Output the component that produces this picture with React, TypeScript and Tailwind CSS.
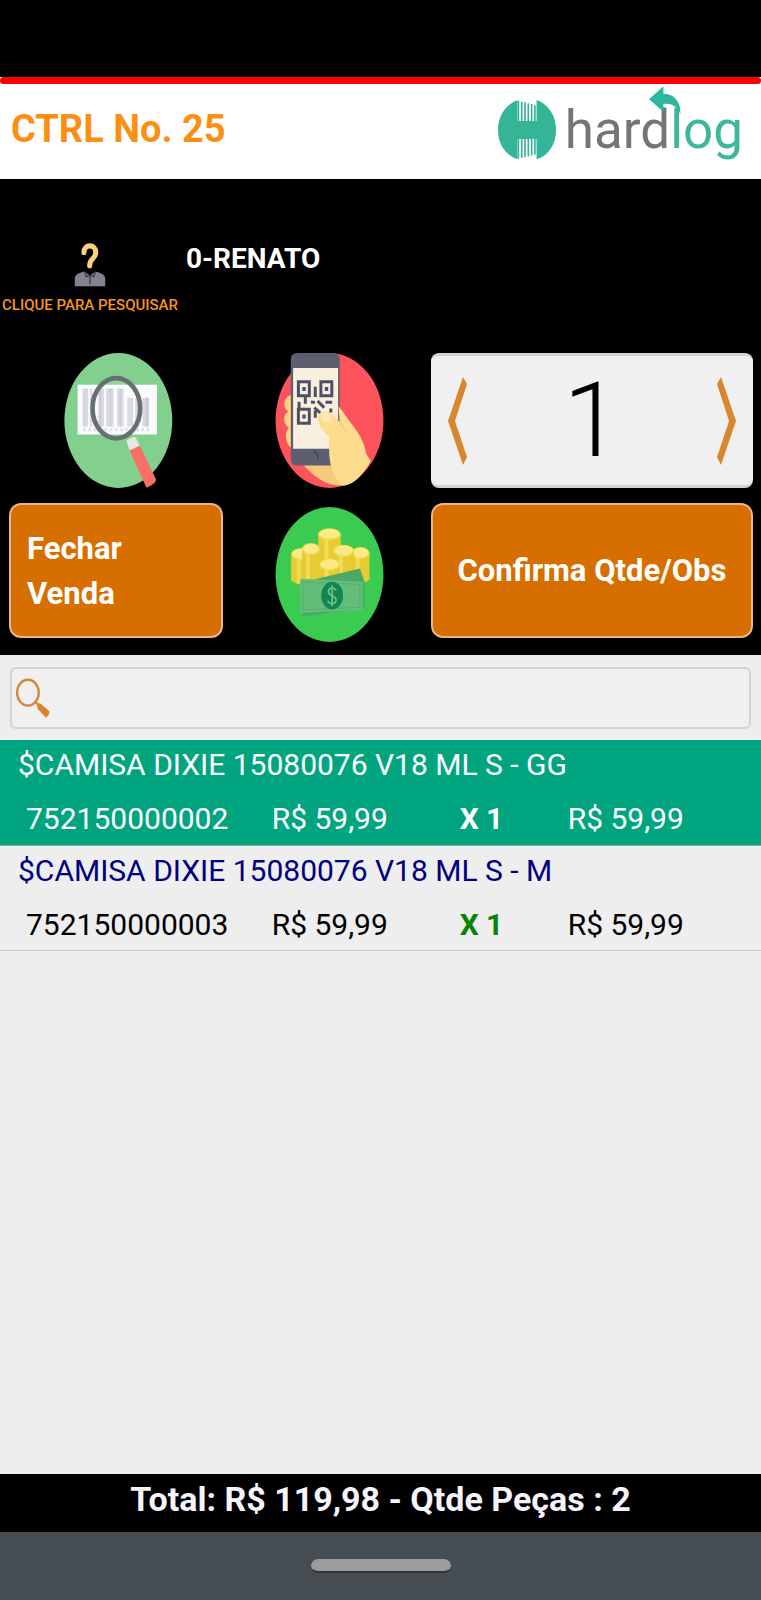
import { useState } from 'react';

type Item = { name: string; code: string; price: string; qty: string; total: string; selected: boolean };

const items: Item[] = [
  { name: '$CAMISA DIXIE 15080076 V18 ML S - GG', code: '752150000002', price: 'R$ 59,99', qty: 'X 1', total: 'R$ 59,99', selected: true },
  { name: '$CAMISA DIXIE 15080076 V18 ML S - M', code: '752150000003', price: 'R$ 59,99', qty: 'X 1', total: 'R$ 59,99', selected: false },
];

function Logo() {
  return (
    <div className="flex items-center gap-2">
      <svg viewBox="50 80 182 190" className="h-16 w-15" aria-hidden="true">
        <path d="M112 84V148H170V84C205 96 229 130 229 175S205 254 170 264V202H112V264C78 252 53 220 53 175S78 98 112 84Z" fill="#35b597" />
        <path
          d="M115 86v66M125 89v62M135 91v60M145 94v57M155 96v55M165 100v50M115 200v62M125 200v60M135 200v58M145 200v55M155 200v52M165 200v49"
          stroke="#35b597"
          strokeWidth="5"
        />
      </svg>
      <div className="relative text-[53px] leading-[64px] font-normal text-[#757575]">
        hard<span className="text-[#3fb79c]">log</span>
        <svg viewBox="500 46 98 86" className="absolute -top-3 left-21 h-7 w-8" aria-hidden="true">
          <path d="M500 87 544 47V70C576 70 599 95 596 132 586 108 570 99 544 101V125Z" fill="#2bb89c" />
        </svg>
      </div>
    </div>
  );
}

function PersonIcon() {
  return (
    <svg viewBox="236 70 92 130" className="h-11 w-8" aria-hidden="true">
      <path d="M264 98C264 72 299 72 299 98 299 118 281 114 281 137" fill="none" stroke="#fbd27c" strokeWidth="15" strokeLinecap="round" />
      <path d="M237 198V176C238 162 246 160 265 154L282 166 299 154C316 160 326 162 327 176V198Z" fill="#84828f" />
      <path d="M265 153 282 165 271 171ZM299 153 282 165 293 171Z" fill="#6c6a77" stroke="#15151b" strokeWidth="2" />
      <path d="M282 165V192" stroke="#202027" strokeWidth="3" />
    </svg>
  );
}

function BarcodeIcon() {
  return (
    <svg viewBox="72 38 327 408" className="h-[135px] w-[109px]" aria-hidden="true">
      <ellipse cx="235" cy="242" rx="163" ry="204" fill="#83d08e" />
      <path d="M112 134H352V284H112Z" fill="#fbfbfe" />
      <path d="M127 145h17v115h-17zM150 145h6v115h-6zM174 145h18v115h-18zM198 145h23v115h-23zM231 145h20v115h-20zM262 173h18v87h-18zM286 173h10v87h-10zM308 173h20v87h-20z" fill="#d6d6e0" />
      <path d="M181 145v115M211 145v115M241 145v115M321 173v87" stroke="#c3c4d1" strokeWidth="5" />
      <path d="M128 270H330" stroke="#dedee8" strokeWidth="9" strokeDasharray="9 7" />
      <ellipse cx="229" cy="205" rx="72" ry="91" fill="#fff" fillOpacity=".12" stroke="#66716f" strokeWidth="14" />
      <path d="M260 305Q264 295 286 291L300 318 270 336Z" fill="#e5e8e7" />
      <path d="M269 333 300 318 349 420Q349 432 320 445Z" fill="#fa6f65" />
    </svg>
  );
}

function PhoneIcon() {
  return (
    <svg viewBox="77 38 326 408" className="h-[135px] w-[109px]" aria-hidden="true">
      <ellipse cx="240" cy="242" rx="163" ry="204" fill="#fd535d" />
      <path d="M126 164C99 170 97 208 117 214 97 222 100 257 118 264 102 276 107 318 127 325Z" fill="#fbd584" />
      <path d="M160 376C200 419 242 446 285 437 319 426 348 394 364 364L348 340 235 350Z" fill="#f5cb7b" />
      <path d="M123 58Q123 38 143 38H253Q271 41 271 58V378H139Q123 375 123 360Z" fill="#5d5e70" />
      <path d="M130 83H266V327H130Z" fill="#f8efdf" />
      <g fill="none" stroke="#4d5064" strokeWidth="9">
        <path d="M146 125h33v42h-33zM214 125h33v42h-33zM146 208h33v42h-33z" />
        <path d="M167 169v22M197 140v31M148 185v22" />
        <path d="M184 187h12M204 183l20 20M194 203l18 16M228 187h20M197 212v22M244 206v12" />
      </g>
      <path d="M158 141h10v12h-10zM226 141h10v12h-10zM158 224h10v12h-10z" fill="#4d5064" />
      <path d="M267 199C278 210 289 230 310 256 334 285 348 320 350 340L364 365C345 400 315 438 280 439 245 405 243 378 239 344L239 290C212 270 195 236 211 221 230 208 250 218 271 247Z" fill="#fddc8d" />
      <path d="M215 223Q232 209 246 234 243 254 225 246 211 239 215 223Z" fill="#ffe8b1" />
      <path d="M271 247Q280 264 294 276" fill="none" stroke="#e8bd70" strokeWidth="3" />
      <path d="M191 337Q205 337 206 360" fill="none" stroke="#48495b" strokeWidth="5" />
    </svg>
  );
}

const stacks = [
  { x: 156, top: 178, bottom: 258, rx: 32 },
  { x: 334, top: 175, bottom: 255, rx: 27 },
  { x: 240, top: 118, bottom: 225, rx: 34 },
  { x: 184, top: 163, bottom: 255, rx: 27 },
  { x: 283, top: 168, bottom: 250, rx: 31 },
  { x: 240, top: 210, bottom: 262, rx: 31 },
];

function MoneyIcon() {
  return (
    <svg viewBox="77 36 326 408" className="h-[135px] w-[109px]" aria-hidden="true">
      <ellipse cx="240" cy="240" rx="163" ry="204" fill="#3bcb50" />
      {stacks.map((s) => (
        <g key={s.x + '-' + s.top}>
          <path d={`M${s.x - s.rx} ${s.top}V${s.bottom}Q${s.x} ${s.bottom + 24} ${s.x + s.rx} ${s.bottom}V${s.top}Z`} fill="#e6cb33" />
          <path d={`M${s.x - 9} ${s.top + 12}V${s.bottom + 8}`} stroke="#f1dc55" strokeWidth="12" />
          <ellipse cx={s.x} cy={s.top} rx={s.rx} ry="18" fill="#f3de55" />
          <ellipse cx={s.x} cy={s.top - 1} rx={s.rx - 4} ry="14" fill="#faeb88" />
        </g>
      ))}
      <path d="M156 264 332 222 346 262V342L160 366Z" fill="#4ba869" />
      <path d="M151 253 341 262V347L153 356Z" fill="#64bd78" />
      <path d="M160 262 332 270V339L161 347Z" fill="none" stroke="#56ae6c" strokeWidth="3" />
      <ellipse cx="248" cy="304" rx="33" ry="42" fill="#148652" />
      <path d="M260 288C253 276 235 280 237 293 239 307 260 302 260 317 259 331 239 331 235 319M248 273V336" fill="none" stroke="#6fc383" strokeWidth="5" />
    </svg>
  );
}

function Chevron({ right = false }: { right?: boolean }) {
  return (
    <svg viewBox="0 0 20 90" className="h-[90px] w-5" aria-hidden="true">
      <path d={right ? 'M0 8 4 1 19 45 4 89 0 81 12 45Z' : 'M20 8 16 1 1 45 16 89 20 81 8 45Z'} fill="#d98630" />
    </svg>
  );
}

export default function App() {
  const [qty, setQty] = useState(1);
  return (
    <div className="flex min-h-screen flex-col bg-[#eeeeee] font-['Roboto','Liberation_Sans',sans-serif]">
      <div className="bg-black pt-[77px]">
        <div className="bg-white">
          <div className="h-[7px] rounded-full bg-[#fe0000]" />
          <header className="flex h-[95px] items-start justify-between pt-[14px] pr-[18px] pl-[11px]">
            <h1 className="pt-[7px] text-[38px] leading-[48px] font-bold text-[#fb8f14]">CTRL No. 25</h1>
            <Logo />
          </header>
        </div>
      </div>

      <section className="bg-black pb-[17px]">
        <div className="flex h-[174px] items-start gap-2 pt-16">
          <button type="button" className="flex flex-col items-center gap-1 pl-[2px] text-[15px] leading-7 font-medium whitespace-nowrap text-[#f6941f]">
            <PersonIcon />
            CLIQUE PARA PESQUISAR
          </button>
          <p className="text-[28px] leading-8 font-bold text-white">0-RENATO</p>
        </div>
        <div className="grid grid-cols-[214fr_208fr_322fr] items-center gap-y-[15px] pr-2 pl-[9px]">
          <button type="button" aria-label="Buscar código de barras" className="justify-self-center pl-1">
            <BarcodeIcon />
          </button>
          <button type="button" aria-label="Ler código QR" className="justify-self-center pl-1">
            <PhoneIcon />
          </button>
          <div className="flex h-[135px] items-center justify-between rounded-lg border-y-3 border-[#d3d3d3] bg-[#f0f0f0] px-4">
            <button type="button" aria-label="Diminuir" onClick={() => setQty(Math.max(1, qty - 1))}>
              <Chevron />
            </button>
            <input
              aria-label="Quantidade"
              value={qty}
              onChange={(e) => setQty(Number(e.target.value) || 1)}
              className="h-[120px] w-32 bg-transparent text-center text-[104px] leading-[120px] font-light text-black outline-none"
            />
            <button type="button" aria-label="Aumentar" onClick={() => setQty(qty + 1)}>
              <Chevron right />
            </button>
          </div>
          <button type="button" className="h-[135px] rounded-xl border-2 border-[#e9b58b] bg-[#d76f00] px-4 text-left text-[31px] leading-[45px] font-bold text-white">
            Fechar
            <br />
            Venda
          </button>
          <button type="button" aria-label="Pagamento" className="-mb-1 self-end justify-self-center pl-1">
            <MoneyIcon />
          </button>
          <button type="button" className="h-[135px] rounded-xl border-2 border-[#e9b58b] bg-[#d76f00] text-[31px] leading-[45px] font-bold whitespace-nowrap text-white">
            Confirma Qtde/Obs
          </button>
        </div>
      </section>

      <div className="px-[10px] pt-3 pb-[11px]">
        <label className="flex h-[62px] items-center rounded-md border-2 border-[#d3d3d3] bg-[#f0f0f0] pl-1">
          <svg viewBox="50 88 100 118" className="h-10 w-[34px]" aria-hidden="true">
            <ellipse cx="85" cy="131" rx="32" ry="38" fill="none" stroke="#d4883c" strokeWidth="7" />
            <path d="M106 157 118 170" stroke="#d4883c" strokeWidth="7" />
            <path d="M113 166Q118 160 123 164L148 186Q151 195 138 205L113 178Z" fill="#dc842b" />
          </svg>
          <input type="search" aria-label="Pesquisar" className="h-full flex-1 bg-transparent px-3 text-[30px] outline-none" />
        </label>
      </div>

      <table className="w-full table-fixed border-collapse text-left text-[30px] leading-[50px] whitespace-nowrap">
        <colgroup>
          <col className="w-[35.7%]" />
          <col className="w-[24.7%]" />
          <col className="w-[14.2%]" />
          <col />
        </colgroup>
        {items.map((it) => (
          <tbody key={it.code} className={it.selected ? 'border-b border-[#8fa89f] bg-[#00a57f] text-white' : 'border-b border-[#cccccc] text-black'}>
            <tr>
              <th colSpan={4} className={it.selected ? 'h-[50px] p-0 pl-[18px] font-normal' : 'h-[50px] p-0 pl-[18px] font-normal text-[#000080]'}>
                {it.name}
              </th>
            </tr>
            <tr>
              <td className="h-[55px] p-0 pt-1 pl-[26px]">{it.code}</td>
              <td className="p-0 pt-1">{it.price}</td>
              <td className={it.selected ? 'p-0 pt-1 font-bold' : 'p-0 pt-1 font-bold text-[#078307]'}>{it.qty}</td>
              <td className="p-0 pt-1">{it.total}</td>
            </tr>
          </tbody>
        ))}
      </table>

      <footer className="mt-auto">
        <p className="h-[58px] bg-black text-center text-[34px] leading-[50px] font-bold text-[#f6f4fb]">Total: R$ 119,98 - Qtde Peças : 2</p>
        <div className="flex h-[68px] justify-center bg-[#454d53] pt-[27px]">
          <div className="h-[14px] w-[140px] rounded-full border-b-2 border-[#303539] bg-[#9b9d9d]" />
        </div>
      </footer>
    </div>
  );
}
